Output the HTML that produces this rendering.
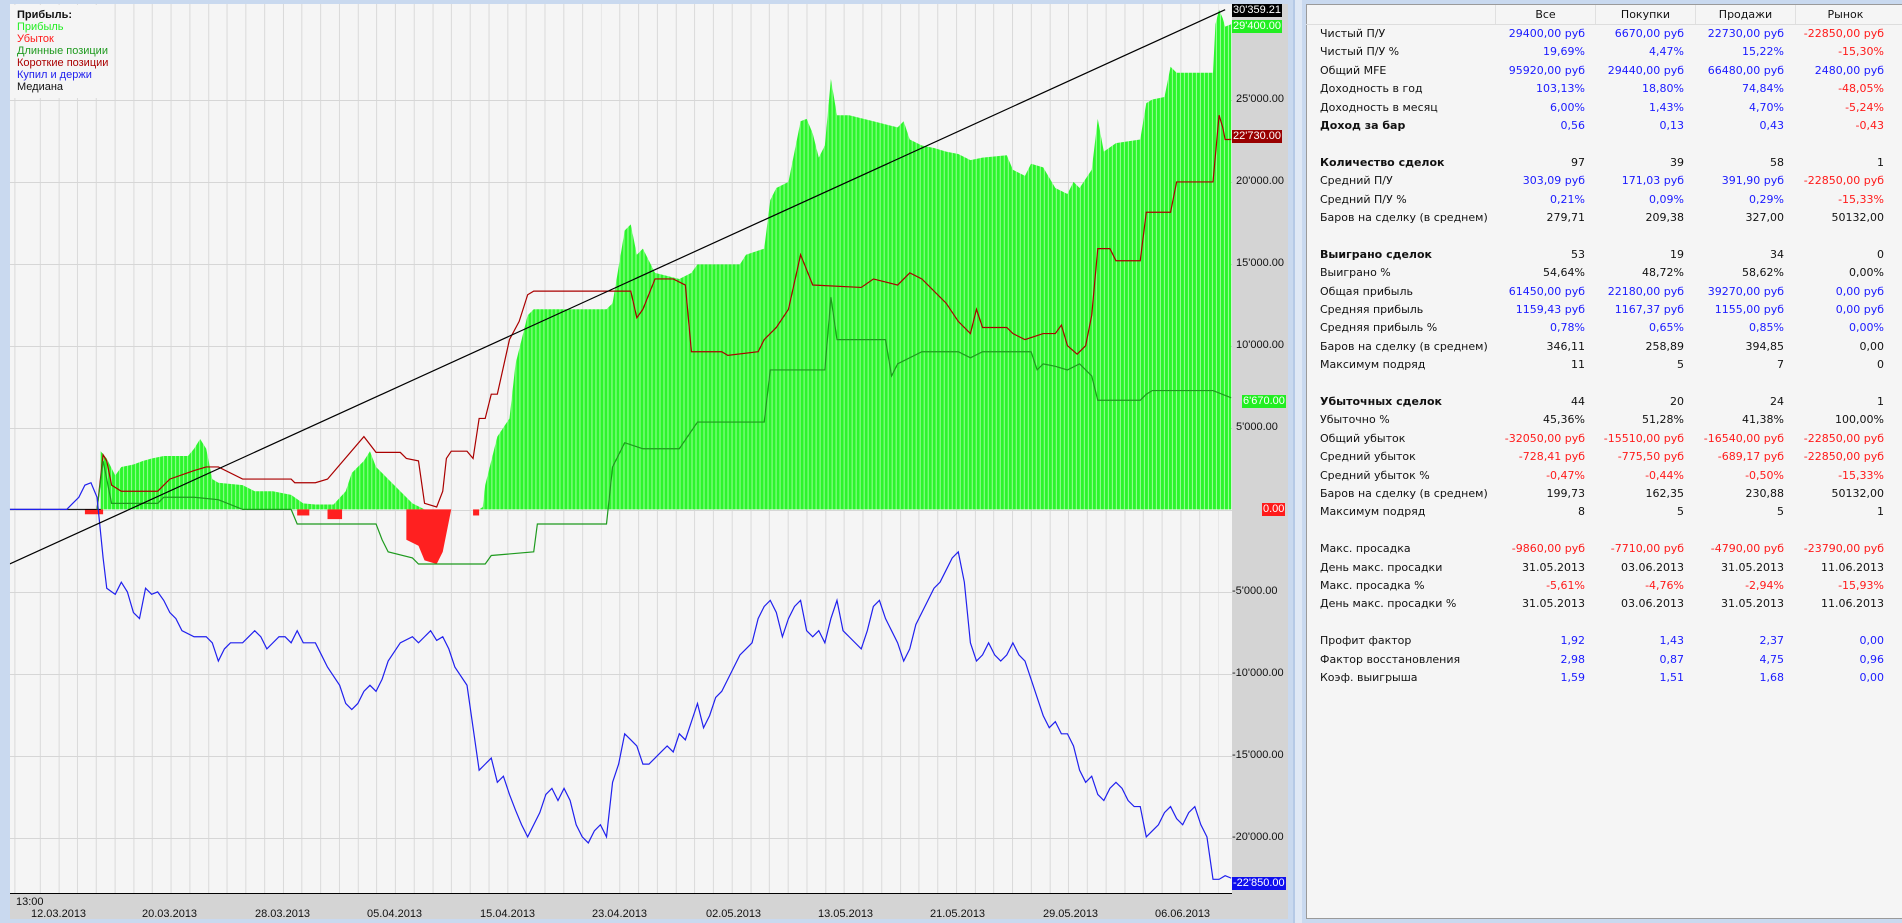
<!DOCTYPE html>
<html><head><meta charset="utf-8"><style>
*{margin:0;padding:0;box-sizing:border-box}
body{width:1902px;height:923px;overflow:hidden;background:#dfe8f5;font-family:"Liberation Sans","DejaVu Sans",sans-serif;position:relative}
#lp{position:absolute;left:0;top:0;width:1295px;height:923px;background:#c9d9ef;border-right:2px solid #b5c9e6}
#plot{position:absolute;left:10px;top:4px;width:1222px;height:889px;background:#f5f5f5}
#vgrid{position:absolute;left:10px;top:4px;width:1222px;height:889px;background-image:repeating-linear-gradient(90deg,transparent 0 17.7px,#dadada 17.7px 18.7px);background-position:12px 0}
.hl{position:absolute;left:10px;width:1222px;height:1px;background:#d6d6d6}
#yax{position:absolute;left:1232px;top:4px;width:56px;height:915px;background:#d4d4d4}
#xax{position:absolute;left:10px;top:893px;width:1222px;height:26px;background:#d4d4d4;border-top:1px solid #000}
.yl{position:absolute;font-size:11px;color:#111;white-space:nowrap;line-height:13px}
.tag{position:absolute;left:1232px;font-size:11px;line-height:13px;padding:0 1px;color:#fff;white-space:nowrap}
.dt{position:absolute;top:908px;font-size:11px;color:#111}
#leg{position:absolute;left:12px;top:5px;width:102px;height:93px;background:#f5f5f5;font-size:11px;line-height:12px;padding-top:4px;padding-left:5px}
#rp{position:absolute;left:1302px;top:0;width:600px;height:923px;background:#c9d9ef}
#tb{position:absolute;left:1306px;top:4px;width:596px;height:915px;background:#f5f5f5;border:1px solid #9a9a9a;border-right:none}
#hd{position:absolute;left:1306px;top:5px;width:596px;height:20px;border-bottom:1px solid #ddd}
.hc{position:absolute;top:0;height:19px;width:100px;text-align:center;font-family:"DejaVu Sans",sans-serif;font-size:11px;line-height:19px;color:#111;border-left:1px solid #e0e0e0}
.r{position:absolute;left:1306px;width:596px;height:18px;font-family:"DejaVu Sans",sans-serif;font-size:11px;line-height:18px;color:#111}
.r span{position:absolute;white-space:nowrap}
.r .l{left:14px}
.r .a{right:317px}.r .b{right:218px}.r .c{right:118px}.r .d{right:18px}
.B{color:#1a1aff}.R{color:#ff1a1a}.bold{font-weight:bold}
</style></head><body>
<div id="lp"></div>
<div id="plot"></div>
<div id="vgrid"></div>
<div class="hl" style="top:100px"></div><div class="hl" style="top:182px"></div><div class="hl" style="top:264px"></div><div class="hl" style="top:346px"></div><div class="hl" style="top:428px"></div><div class="hl" style="top:510px"></div><div class="hl" style="top:592px"></div><div class="hl" style="top:674px"></div><div class="hl" style="top:756px"></div><div class="hl" style="top:838px"></div>
<div id="yax"></div>
<div id="xax"></div>

<svg style="position:absolute;left:0;top:0" width="1902" height="923" viewBox="0 0 1568 761" preserveAspectRatio="none">
<defs>
<pattern id="gp" patternUnits="userSpaceOnUse" width="3.3" height="10"><rect width="3.3" height="10" fill="#9dff9d"/><rect width="2.5" height="10" fill="#2cf52c"/></pattern>
<clipPath id="cp"><rect x="8.2" y="3.3" width="1007.4" height="733"/></clipPath>
</defs>
<g clip-path="url(#cp)">
<polygon fill="url(#gp)" points="83,420 83,372 88,378 95,392 100,385 110,383 118,380 125,378 135,376 155,376 160,370 165,362 170,370 175,395 180,398 200,400 210,405 225,405 240,408 250,415 260,416 275,416 285,405 290,390 300,380 305,372 310,385 320,395 330,405 340,415 350,420 372,420 395,420 398,418 400,400 405,380 410,360 420,345 425,300 430,280 435,260 440,255 500,255 505,250 510,220 515,190 520,185 525,210 530,205 540,225 560,230 570,225 575,218 610,218 615,210 630,205 635,165 640,155 650,150 660,100 665,98 670,110 675,130 680,120 685,65 690,95 700,95 720,100 740,105 745,100 750,115 760,120 770,122 780,125 790,127 800,132 810,130 830,128 835,140 845,145 850,135 860,138 870,155 880,160 885,150 890,155 900,140 905,98 910,125 920,118 940,115 945,85 950,82 960,80 965,55 970,60 1000,60 1002,20 1005,8 1008,15 1010,22 1015,20 1015,420"/>
<g fill="#ff2020">
<rect x="70" y="420" width="15" height="4"/><rect x="245" y="420" width="10" height="5"/><rect x="270" y="420" width="12" height="8"/><rect x="390" y="420" width="5" height="5"/>
<polygon points="335,420 335,445 345,450 350,462 360,465 365,455 370,430 372,420"/>
</g>
<g fill="none">
<polyline stroke="#000" stroke-width="1" vector-effect="non-scaling-stroke" points="8,420 83,420"/>
<polyline stroke="#aa0000" stroke-width="1.2" vector-effect="non-scaling-stroke" points="80,420 85,375 88,380 92,400 100,405 130,405 140,395 160,388 170,385 180,385 200,395 240,395 243,398 260,398 270,395 300,360 310,373 330,373 335,378 345,380 350,415 360,418 365,405 368,378 372,372 385,372 390,378 395,345 400,345 405,325 410,325 420,280 428,265 435,243 440,240 520,240 525,262 530,255 540,230 555,230 565,235 570,290 595,290 600,293 625,290 630,280 640,270 650,255 660,210 670,235 710,237 720,230 740,235 750,225 760,230 780,250 790,265 800,275 805,255 810,270 830,270 835,275 845,280 860,275 870,275 875,268 880,285 888,292 895,285 900,260 905,205 915,205 920,215 940,215 945,175 965,175 970,150 1000,150 1005,95 1008,105 1010,115 1015,115"/>
<polyline stroke="#1e9a1e" stroke-width="1.2" vector-effect="non-scaling-stroke" points="80,420 85,380 88,395 92,415 130,415 135,410 160,410 180,412 200,420 240,420 245,432 310,432 315,445 320,455 340,460 345,465 400,465 405,458 440,455 443,432 500,432 505,385 515,365 530,370 560,370 575,348 630,348 635,305 680,305 685,245 690,280 730,280 735,310 740,300 760,290 790,290 800,295 810,290 850,290 855,305 860,300 870,302 880,305 890,300 900,310 905,330 940,330 945,325 950,322 1000,322 1015,328"/>
<polyline stroke="#2020ee" stroke-width="1.2" vector-effect="non-scaling-stroke" points="8,420 55,420 60,415 65,410 70,400 75,398 80,410 85,460 88,485 95,490 100,480 105,488 110,505 115,510 120,485 125,490 130,488 135,495 140,505 145,510 150,520 160,525 170,525 175,530 180,545 185,535 190,530 200,530 210,520 215,525 220,535 230,525 235,525 240,530 245,520 250,530 260,530 265,540 270,550 280,565 285,580 290,585 295,580 300,570 305,565 310,570 315,560 320,545 330,530 340,525 345,530 350,525 355,520 360,528 365,525 370,535 375,550 385,565 390,600 395,635 400,630 405,625 410,645 415,640 420,655 425,668 430,680 435,690 440,680 445,670 450,655 455,650 460,660 465,650 470,660 475,680 480,690 485,695 490,685 495,680 500,690 505,645 510,630 515,605 520,610 525,615 530,630 535,630 540,625 545,620 550,615 555,620 560,605 565,610 570,595 575,580 580,600 585,590 590,575 595,570 600,560 605,550 610,540 615,535 620,530 625,510 630,500 635,495 640,505 645,525 650,510 655,500 660,495 665,520 670,525 675,520 680,530 685,510 690,495 695,520 700,525 710,535 715,520 720,500 725,495 730,510 735,520 740,530 745,545 750,535 755,515 760,505 765,495 770,485 775,480 780,470 785,460 790,455 795,480 800,530 805,545 810,540 815,530 820,540 825,545 830,540 835,530 840,540 845,545 850,560 855,575 860,590 865,600 870,595 875,605 880,605 885,615 890,635 895,645 900,640 905,655 910,660 915,650 920,645 925,650 930,660 935,665 940,665 945,690 950,685 955,680 960,670 965,665 970,675 975,680 980,670 985,665 990,680 995,690 1000,725 1005,725 1010,722 1015,724"/>
<polyline stroke="#000" stroke-width="1.2" vector-effect="non-scaling-stroke" points="8,465 1010,8"/>
</g>
</g>
</svg>

<div id="leg"><b style="color:#111">Прибыль:</b><br><span style="color:#22ee22">Прибыль</span><br><span style="color:#ff1a1a">Убыток</span><br><span style="color:#1e9a1e">Длинные позиции</span><br><span style="color:#aa0000">Короткие позиции</span><br><span style="color:#2020ee">Купил и держи</span><br><span style="color:#111">Медиана</span></div>

<div class="yl" style="left:1236px;top:93px">25'000.00</div>
<div class="yl" style="left:1236px;top:175px">20'000.00</div>
<div class="yl" style="left:1236px;top:257px">15'000.00</div>
<div class="yl" style="left:1236px;top:339px">10'000.00</div>
<div class="yl" style="left:1236px;top:421px">5'000.00</div>
<div class="yl" style="left:1232px;top:585px">-5'000.00</div>
<div class="yl" style="left:1232px;top:667px">-10'000.00</div>
<div class="yl" style="left:1232px;top:749px">-15'000.00</div>
<div class="yl" style="left:1232px;top:831px">-20'000.00</div>
<div class="tag" style="top:4px;background:#000">30'359.21</div>
<div class="tag" style="top:20px;background:#22ee22">29'400.00</div>
<div class="tag" style="top:130px;background:#990000">22'730.00</div>
<div class="tag" style="top:395px;background:#22ee22;left:1242px">6'670.00</div>
<div class="tag" style="top:503px;background:#ff1a1a;left:1262px">0.00</div>
<div class="tag" style="top:877px;background:#1010ee">-22'850.00</div>

<div class="dt" style="left:16px;top:896px">13:00</div>
<div class="dt" style="left:31px">12.03.2013</div><div class="dt" style="left:142px">20.03.2013</div><div class="dt" style="left:255px">28.03.2013</div><div class="dt" style="left:367px">05.04.2013</div><div class="dt" style="left:480px">15.04.2013</div><div class="dt" style="left:592px">23.04.2013</div><div class="dt" style="left:706px">02.05.2013</div><div class="dt" style="left:818px">13.05.2013</div><div class="dt" style="left:930px">21.05.2013</div><div class="dt" style="left:1043px">29.05.2013</div><div class="dt" style="left:1155px">06.06.2013</div>

<div id="rp"></div>
<div id="tb"></div>
<div id="hd"><div class="hc" style="left:189px">Все</div><div class="hc" style="left:289px">Покупки</div><div class="hc" style="left:389px">Продажи</div><div class="hc" style="left:489px">Рынок</div></div>

<div class="r" style="top:25px"><span class="l">Чистый П/У</span><span class="a B">29400,00 руб</span><span class="b B">6670,00 руб</span><span class="c B">22730,00 руб</span><span class="d R">-22850,00 руб</span></div>
<div class="r" style="top:43.4px"><span class="l">Чистый П/У %</span><span class="a B">19,69%</span><span class="b B">4,47%</span><span class="c B">15,22%</span><span class="d R">-15,30%</span></div>
<div class="r" style="top:61.8px"><span class="l">Общий MFE</span><span class="a B">95920,00 руб</span><span class="b B">29440,00 руб</span><span class="c B">66480,00 руб</span><span class="d B">2480,00 руб</span></div>
<div class="r" style="top:80.2px"><span class="l">Доходность в год</span><span class="a B">103,13%</span><span class="b B">18,80%</span><span class="c B">74,84%</span><span class="d R">-48,05%</span></div>
<div class="r" style="top:98.6px"><span class="l">Доходность в месяц</span><span class="a B">6,00%</span><span class="b B">1,43%</span><span class="c B">4,70%</span><span class="d R">-5,24%</span></div>
<div class="r" style="top:117px"><span class="l bold">Доход за бар</span><span class="a B">0,56</span><span class="b B">0,13</span><span class="c B">0,43</span><span class="d R">-0,43</span></div>

<div class="r" style="top:153.8px"><span class="l bold">Количество сделок</span><span class="a">97</span><span class="b">39</span><span class="c">58</span><span class="d">1</span></div>
<div class="r" style="top:172.2px"><span class="l">Средний П/У</span><span class="a B">303,09 руб</span><span class="b B">171,03 руб</span><span class="c B">391,90 руб</span><span class="d R">-22850,00 руб</span></div>
<div class="r" style="top:190.6px"><span class="l">Средний П/У %</span><span class="a B">0,21%</span><span class="b B">0,09%</span><span class="c B">0,29%</span><span class="d R">-15,33%</span></div>
<div class="r" style="top:209px"><span class="l">Баров на сделку (в среднем)</span><span class="a">279,71</span><span class="b">209,38</span><span class="c">327,00</span><span class="d">50132,00</span></div>

<div class="r" style="top:245.8px"><span class="l bold">Выиграно сделок</span><span class="a">53</span><span class="b">19</span><span class="c">34</span><span class="d">0</span></div>
<div class="r" style="top:264.2px"><span class="l">Выиграно %</span><span class="a">54,64%</span><span class="b">48,72%</span><span class="c">58,62%</span><span class="d">0,00%</span></div>
<div class="r" style="top:282.6px"><span class="l">Общая прибыль</span><span class="a B">61450,00 руб</span><span class="b B">22180,00 руб</span><span class="c B">39270,00 руб</span><span class="d B">0,00 руб</span></div>
<div class="r" style="top:301px"><span class="l">Средняя прибыль</span><span class="a B">1159,43 руб</span><span class="b B">1167,37 руб</span><span class="c B">1155,00 руб</span><span class="d B">0,00 руб</span></div>
<div class="r" style="top:319.4px"><span class="l">Средняя прибыль %</span><span class="a B">0,78%</span><span class="b B">0,65%</span><span class="c B">0,85%</span><span class="d B">0,00%</span></div>
<div class="r" style="top:337.8px"><span class="l">Баров на сделку (в среднем)</span><span class="a">346,11</span><span class="b">258,89</span><span class="c">394,85</span><span class="d">0,00</span></div>
<div class="r" style="top:356.2px"><span class="l">Максимум подряд</span><span class="a">11</span><span class="b">5</span><span class="c">7</span><span class="d">0</span></div>

<div class="r" style="top:393px"><span class="l bold">Убыточных сделок</span><span class="a">44</span><span class="b">20</span><span class="c">24</span><span class="d">1</span></div>
<div class="r" style="top:411.4px"><span class="l">Убыточно %</span><span class="a">45,36%</span><span class="b">51,28%</span><span class="c">41,38%</span><span class="d">100,00%</span></div>
<div class="r" style="top:429.8px"><span class="l">Общий убыток</span><span class="a R">-32050,00 руб</span><span class="b R">-15510,00 руб</span><span class="c R">-16540,00 руб</span><span class="d R">-22850,00 руб</span></div>
<div class="r" style="top:448.2px"><span class="l">Средний убыток</span><span class="a R">-728,41 руб</span><span class="b R">-775,50 руб</span><span class="c R">-689,17 руб</span><span class="d R">-22850,00 руб</span></div>
<div class="r" style="top:466.6px"><span class="l">Средний убыток %</span><span class="a R">-0,47%</span><span class="b R">-0,44%</span><span class="c R">-0,50%</span><span class="d R">-15,33%</span></div>
<div class="r" style="top:485px"><span class="l">Баров на сделку (в среднем)</span><span class="a">199,73</span><span class="b">162,35</span><span class="c">230,88</span><span class="d">50132,00</span></div>
<div class="r" style="top:503.4px"><span class="l">Максимум подряд</span><span class="a">8</span><span class="b">5</span><span class="c">5</span><span class="d">1</span></div>

<div class="r" style="top:540.2px"><span class="l">Макс. просадка</span><span class="a R">-9860,00 руб</span><span class="b R">-7710,00 руб</span><span class="c R">-4790,00 руб</span><span class="d R">-23790,00 руб</span></div>
<div class="r" style="top:558.6px"><span class="l">День макс. просадки</span><span class="a">31.05.2013</span><span class="b">03.06.2013</span><span class="c">31.05.2013</span><span class="d">11.06.2013</span></div>
<div class="r" style="top:577px"><span class="l">Макс. просадка %</span><span class="a R">-5,61%</span><span class="b R">-4,76%</span><span class="c R">-2,94%</span><span class="d R">-15,93%</span></div>
<div class="r" style="top:595.4px"><span class="l">День макс. просадки %</span><span class="a">31.05.2013</span><span class="b">03.06.2013</span><span class="c">31.05.2013</span><span class="d">11.06.2013</span></div>

<div class="r" style="top:632.2px"><span class="l">Профит фактор</span><span class="a B">1,92</span><span class="b B">1,43</span><span class="c B">2,37</span><span class="d B">0,00</span></div>
<div class="r" style="top:650.6px"><span class="l">Фактор восстановления</span><span class="a B">2,98</span><span class="b B">0,87</span><span class="c B">4,75</span><span class="d B">0,96</span></div>
<div class="r" style="top:669px"><span class="l">Коэф. выигрыша</span><span class="a B">1,59</span><span class="b B">1,51</span><span class="c B">1,68</span><span class="d B">0,00</span></div>
</body></html>
